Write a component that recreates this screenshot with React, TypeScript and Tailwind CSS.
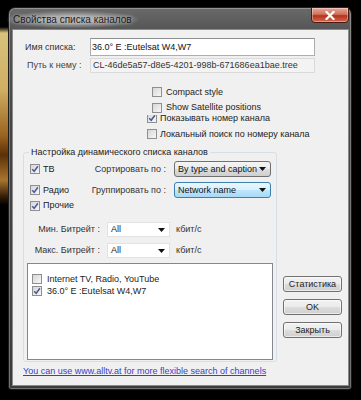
import React from "react";

const FONT = { fontFamily: '"Liberation Sans", Arial, sans-serif' };

function Check({ checked }: { checked?: boolean }) {
  return (
    <span className="flex h-[10px] w-[10px] shrink-0 items-center justify-center border border-[#8e8f8f] bg-[linear-gradient(135deg,#d6d6d6,#f7f7f7)]">
      {checked && (
        <svg width="8" height="8" viewBox="0 0 8 8">
          <path d="M1.2 4.2 L3.2 6.3 L6.9 1.3" fill="none" stroke="#4a5c98" strokeWidth="1.5" />
        </svg>
      )}
    </span>
  );
}

function Arrow() {
  return (
    <svg width="7" height="4" viewBox="0 0 7 4" className="shrink-0">
      <path d="M0 0 H7 L3.5 4 Z" fill="#111" />
    </svg>
  );
}

export default function App() {
  return (
    <div className="flex h-[400px] w-[361px] overflow-hidden bg-black text-[9px] leading-[11px] text-[#1c1c1c]" style={FONT}>
      <div className="h-full w-[8px] shrink-0 bg-[linear-gradient(to_bottom,#000_0px,#000_27px,#d8c27c_33px,#cfae62_90px,#9a6420_135px,#5c3008_155px,#a7752e_180px,#3a2008_196px,#000_205px)]" />
      <div className="mt-[7px] flex h-[383px] w-[344px] flex-col rounded-t-[7px] rounded-b-[3px] border border-[#1c1c1c] bg-[linear-gradient(to_bottom,#6a6a6a_0px,#555_22px,#454545_120px,#3c3c3c_100%)] shadow-[inset_0_0_0_1px_rgba(255,255,255,0.28)]">
        <div className="flex h-[22px] shrink-0 items-center">
          <span className="-ml-[2px] rounded-[8px] bg-[radial-gradient(ellipse_at_center,rgba(230,230,230,0.55)_30%,rgba(230,230,230,0)_75%)] px-[6px] py-[3px] text-[10px] text-[#1a1a1a] [text-shadow:0_0_4px_rgba(255,255,255,0.7)]">
            Свойства списка каналов
          </span>
          <div className="mr-[2px] ml-auto -mt-[1px] flex h-[16px] w-[38px] items-center justify-center self-start rounded-b-[4px] border border-[#4a1a12] bg-[linear-gradient(to_bottom,#e9a899_0%,#d0705a_45%,#b5321c_55%,#cf6a4f_100%)] shadow-[inset_0_0_0_1px_rgba(255,255,255,0.35)]">
            <svg width="10" height="9" viewBox="0 0 10 9">
              <path d="M1.5 1 L8.5 8 M8.5 1 L1.5 8" stroke="#fff" strokeWidth="2.2" strokeLinecap="square" />
            </svg>
          </div>
        </div>
        <div className="ml-[4px] flex h-[355px] w-[335px] flex-col bg-[#f0f0f0] shadow-[0_0_0_1px_#8a8a8a]">
          {/* Name */}
          <div className="mt-[8px] flex h-[18px] items-center">
            <span className="w-[77px] pl-[12px] text-[#333]">Имя списка:</span>
            <div className="flex h-[18px] w-[225px] items-center border border-[#abadb3] border-t-[#8e8f8f] bg-white pl-[1px] text-[#111]">
              36.0° E :Eutelsat W4,W7
            </div>
          </div>
          <div className="mt-[2px] flex h-[15px] items-center">
            <span className="w-[77px] pl-[14px] text-[#444]">Путь к нему :</span>
            <div className="flex h-[15px] w-[225px] items-center border border-[#dadada] bg-[#f3f3f3] pl-[2px] text-[#333]">
              CL-46de5a57-d8e5-4201-998b-671686ea1bae.tree
            </div>
          </div>

          {/* Checkboxes */}
          <div className="mt-[12px] flex h-[14px] items-center gap-[4px] pl-[139px]">
            <Check />
            <span>Compact style</span>
          </div>
          <div className="relative z-10 mt-[1px] ml-[133px] flex h-[15px] w-[150px] items-center gap-[4px] bg-[#f0f0f0] pl-[6px]">
            <Check />
            <span>Show Satellite positions</span>
          </div>
          <div className="-mt-[4px] flex h-[14px] items-center gap-[3px] pl-[134px]">
            <Check checked />
            <span>Показывать номер канала</span>
          </div>
          <div className="mt-[2px] flex h-[14px] items-center gap-[3px] pl-[134px]">
            <Check />
            <span>Локальный поиск по номеру канала</span>
          </div>

          {/* Group + buttons */}
          <div className="mt-[6px] flex">
            <fieldset className="ml-[10px] w-[254px] rounded-[3px] border border-[#d5dfe5] p-0 pb-[1px]">
              <legend className="ml-[5px] px-[2px] leading-[11px] text-[#222]">
                Настройка динамического списка каналов
              </legend>
              <div className="mt-[3px] flex h-[16px] items-center">
                <div className="flex w-[60px] items-center gap-[3px] pl-[6px]">
                  <Check checked />
                  <span>ТВ</span>
                </div>
                <span className="w-[82px] text-right text-[#333]">Сортировать по :</span>
                <div className="ml-[8px] flex h-[16px] w-[97px] items-center justify-between rounded-[3px] border border-[#707070] bg-[linear-gradient(to_bottom,#f4f4f4_0%,#ebebeb_50%,#dddddd_51%,#cfcfcf_100%)] pr-[4px] pl-[3px] text-[#111]">
                  <span>By type and caption</span>
                  <Arrow />
                </div>
              </div>
              <div className="mt-[5px] flex h-[16px] items-center">
                <div className="flex w-[60px] items-center gap-[3px] pl-[6px]">
                  <Check checked />
                  <span>Радио</span>
                </div>
                <span className="w-[82px] text-right text-[#333]">Группировать по :</span>
                <div className="ml-[8px] flex h-[16px] w-[97px] items-center justify-between rounded-[3px] border border-[#3c7fb1] bg-[linear-gradient(to_bottom,#eaf6fd_0%,#d9f0fc_50%,#bee6fd_51%,#a7d9f5_100%)] pr-[4px] pl-[3px] text-[#111]">
                  <span>Network name</span>
                  <Arrow />
                </div>
              </div>
              <div className="mt-[1px] flex h-[13px] items-center gap-[3px] pl-[6px]">
                <Check checked />
                <span>Прочие</span>
              </div>

              <div className="mt-[10px] flex h-[15px] items-center">
                <span className="w-[76px] text-right text-[#333]">Мин. Битрейт :</span>
                <div className="ml-[7px] flex h-[15px] w-[63px] items-center justify-between border border-[#e2e2e2] bg-white pr-[4px] pl-[3px]">
                  <span>All</span>
                  <Arrow />
                </div>
                <span className="ml-[6px] text-[#333]">кбит/с</span>
              </div>
              <div className="mt-[6px] flex h-[15px] items-center">
                <span className="w-[76px] text-right text-[#333]">Макс. Битрейт :</span>
                <div className="ml-[7px] flex h-[15px] w-[63px] items-center justify-between border border-[#e2e2e2] bg-white pr-[4px] pl-[3px]">
                  <span>All</span>
                  <Arrow />
                </div>
                <span className="ml-[6px] text-[#333]">кбит/с</span>
              </div>

              <div className="mt-[5px] ml-[3px] flex h-[97px] w-[246px] flex-col border border-[#828790] bg-white pt-[9px]">
                <div className="flex h-[12px] items-center gap-[5px] pl-[4px]">
                  <Check />
                  <span>Internet TV, Radio, YouTube</span>
                </div>
                <div className="flex h-[12px] items-center gap-[5px] pl-[4px]">
                  <Check checked />
                  <span>36.0° E :Eutelsat W4,W7</span>
                </div>
              </div>
            </fieldset>

            <div className="ml-[6px] flex flex-col gap-[7px] pt-[129px]">
              {["Статистика", "OK", "Закрыть"].map((t) => (
                <div
                  key={t}
                  className="flex h-[16px] w-[59px] items-center justify-center rounded-[3px] border border-[#707070] bg-[linear-gradient(to_bottom,#f2f2f2_0%,#ebebeb_50%,#dddddd_51%,#cfcfcf_100%)] text-[#222] shadow-[inset_0_0_0_1px_rgba(255,255,255,0.6)]"
                >
                  {t}
                </div>
              ))}
            </div>
          </div>

          <a className="mt-[4px] ml-[10px] w-fit text-[#3d3dc8] underline">
            You can use www.alltv.at for more flexible search of channels
          </a>
        </div>
      </div>
    </div>
  );
}
